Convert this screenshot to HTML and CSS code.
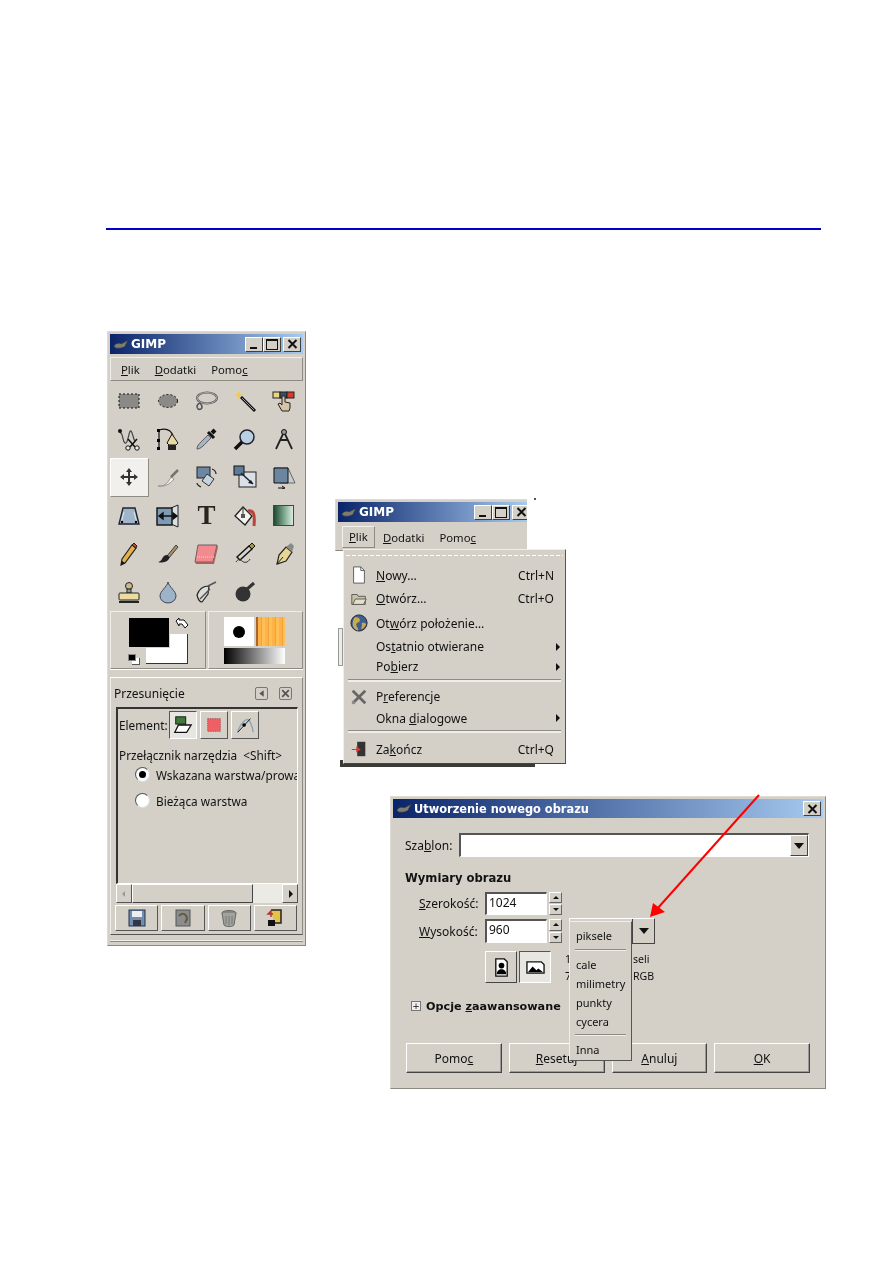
FILE: index.html
```html
<!DOCTYPE html>
<html lang="pl">
<head>
    <meta charset="UTF-8">
    <meta name="viewport" content="width=device-width, initial-scale=1.0">
    <title>GIMP - nowy obraz</title>
    <link rel="stylesheet" href="styles.css">
</head>
<body>
<div class="page">
    <div class="rule"></div>

    <!-- toolbox -->
    <div class="win toolbox">
        <div class="titlebar">
            <svg class="wilber" viewBox="0 0 20 12"><path d="M1 8 C3 4 7 4 10 5 L18 1 L15 6 C15 10 7 11 3 10Z" fill="#7d7c70" stroke="#35352f" stroke-width=".7"/></svg>
            <span class="title">GIMP</span>
            <div class="winbtns">
                <span class="winbtn"><i class="min"></i></span><span class="winbtn"><i class="max"></i></span><span class="winbtn gap"><svg class="cross" viewBox="0 0 10 10"><path d="M1 1l8 8M9 1l-8 8" stroke="#111" stroke-width="2"/></svg></span>
            </div>
        </div>
        <div class="menubar">
            <span class="menuitem"><u>P</u>lik</span>
            <span class="menuitem"><u>D</u>odatki</span>
            <span class="menuitem">Pomo<u>c</u></span>
        </div>
        <div class="tools">
            <div class="tool"><svg viewBox="0 0 24 24"><rect x="2" y="5" width="20" height="14" fill="#8b8a86" stroke="#111" stroke-dasharray="2 2"/></svg></div>
            <div class="tool"><svg viewBox="0 0 24 24"><ellipse cx="12" cy="12" rx="9.5" ry="6.5" fill="#8b8a86" stroke="#111" stroke-dasharray="2 2"/></svg></div>
            <div class="tool"><svg viewBox="0 0 24 24"><ellipse cx="13" cy="9" rx="10" ry="5.5" fill="none" stroke="#555" stroke-width="2"/><ellipse cx="13" cy="9" rx="10" ry="5.5" fill="none" stroke="#ddd" stroke-width=".6"/><path d="M6 14c-3 1-4 4-2 6 2 1 4 0 4-2s-1-3-2-4" fill="none" stroke="#555" stroke-width="1.6"/></svg></div>
            <div class="tool"><svg viewBox="0 0 24 24"><path d="M8 8l14 14" stroke="#111" stroke-width="3"/><path d="M9 9l12 12" stroke="#999"/><path d="M6 1l1 4 4 1-4 1-1 4-1-4-4-1 4-1z" fill="#f4c93c"/></svg></div>
            <div class="tool"><svg viewBox="0 0 24 24"><rect x="1" y="3" width="7" height="6" fill="#ecd67c" stroke="#222"/><rect x="8" y="3" width="7" height="6" fill="#36506f" stroke="#222"/><rect x="15" y="3" width="7" height="6" fill="#d93a2c" stroke="#222"/><path d="M10 7h3v6l5 1v5l-1 3H10L6 15l2-1 2 2z" fill="#d6c3a8" stroke="#222"/></svg></div>

            <div class="tool"><svg viewBox="0 0 24 24"><path d="M3 5c4 3 2 9 5 11S12 2 14 4s2 8 4 10" fill="none" stroke="#444" stroke-width="1.2"/><circle cx="3" cy="4" r="2" fill="#111"/><path d="M11 12l7 8M20 12l-7 8" stroke="#111" stroke-width="1.5"/><circle cx="11" cy="21" r="2.2" fill="#eee" stroke="#111"/><circle cx="20" cy="21" r="2.2" fill="#eee" stroke="#111"/></svg></div>
            <div class="tool"><svg viewBox="0 0 24 24"><path d="M3 3v20M3 3c7-2 12 0 14 6" fill="none" stroke="#111" stroke-width="1.2"/><rect x="1" y="2" width="3" height="3"/><rect x="1" y="12" width="3" height="3"/><rect x="1" y="20" width="3" height="3"/><path d="M16 7l-5 9 2 2h7l2-2z" fill="#e7d9a0" stroke="#111"/><rect x="12" y="18" width="8" height="5" fill="#222"/></svg></div>
            <div class="tool"><svg viewBox="0 0 24 24"><path d="M3 22c0-4 3-6 11-14l3 3C10 18 7 22 3 22z" fill="#a9b4bd" stroke="#556"/><path d="M14 5l6 6" stroke="#111" stroke-width="3"/><path d="M18 6l3-3" stroke="#111" stroke-width="4"/></svg></div>
            <div class="tool"><svg viewBox="0 0 24 24"><circle cx="14" cy="10" r="7" fill="#b9cfe2" stroke="#223" stroke-width="1.5"/><path d="M9 15l-7 7" stroke="#111" stroke-width="3.5"/></svg></div>
            <div class="tool"><svg viewBox="0 0 24 24"><circle cx="12" cy="5" r="2.5" fill="#999" stroke="#111"/><path d="M11 7L4 22M13 7l7 15M8 13h8" fill="none" stroke="#222" stroke-width="1.8"/></svg></div>

            <div class="tool active"><svg viewBox="0 0 24 24"><path d="M12 3l3 4h-2v4h4V9l4 3-4 3v-2h-4v4h2l-3 4-3-4h2v-4H7v2l-4-3 4-3v2h4V7H9z" fill="#333"/></svg></div>
            <div class="tool"><svg viewBox="0 0 24 24"><path d="M2 21c6 1 10-3 13-9l3 2c-3 4-8 8-16 7z" fill="#f1f1ee" stroke="#99958c"/><path d="M15 12l7-7" stroke="#77736c" stroke-width="2.5"/></svg></div>
            <div class="tool"><svg viewBox="0 0 24 24"><rect x="3" y="2" width="13" height="11" fill="#6d86a3" stroke="#222"/><path d="M13 9l7 5-5 7-7-5z" fill="#c6d2de" stroke="#333"/><path d="M18 4c3 1 4 3 4 5M3 18c0 2 2 3 4 4" fill="none" stroke="#222" stroke-width="1.2"/></svg></div>
            <div class="tool"><svg viewBox="0 0 24 24"><rect x="6" y="7" width="17" height="15" fill="#d9e0e6" stroke="#222"/><rect x="1" y="1" width="10" height="9" fill="#5e7a99" stroke="#111"/><path d="M8 8l12 11" stroke="#223" stroke-width="1.5"/><path d="M20 19l-5-1 3-3z" fill="#111"/></svg></div>
            <div class="tool"><svg viewBox="0 0 24 24"><path d="M2 3h14l7 15H8z" fill="#c9cdd0" stroke="#666"/><path d="M2 3h14v15H2z" fill="#6c86a0" stroke="#111"/><path d="M6 23h6m-2-2l3 2-3 1" stroke="#111" fill="none"/></svg></div>

            <div class="tool"><svg viewBox="0 0 24 24"><path d="M6 4h12l4 16H2z" fill="#9fb5c9" stroke="#223" stroke-width="1.4"/><path d="M7 8L4 19M17 8l3 11" stroke="#dfe8ef"/><circle cx="5" cy="18" r="1.2"/><circle cx="19" cy="18" r="1.2"/></svg></div>
            <div class="tool"><svg viewBox="0 0 24 24"><path d="M15 4l7-3v22l-7-3z" fill="#d9dee3" stroke="#222"/><rect x="1" y="4" width="15" height="17" fill="#7f9ab5" stroke="#111" stroke-width="1.4"/><path d="M3 12h18M3 12l4-3v6zM21 12l-4-3v6z" fill="#111" stroke="#111" stroke-width="1.4"/></svg></div>
            <div class="tool"><span class="glyph-t">T</span></div>
            <div class="tool"><svg viewBox="0 0 24 24"><path d="M10 3l9 9-7 9-10-9z" fill="#f2f2ee" stroke="#222" stroke-width="1.3"/><path d="M10 3v9" stroke="#333"/><rect x="8" y="10" width="4" height="4" fill="#555"/><path d="M15 7c6-1 7 4 6 15" fill="none" stroke="#b8443a" stroke-width="3"/></svg></div>
            <div class="tool"><div class="blend"></div></div>

            <div class="tool"><svg viewBox="0 0 24 24"><path d="M5 17L15 3l4 3L8 21l-4 2z" fill="#e3b24c" stroke="#222" stroke-width="1.2"/><path d="M15 3l4 3 1-2-3-3z" fill="#c8443c" stroke="#222"/><path d="M4 23l1-4 3 2z" fill="#111"/></svg></div>
            <div class="tool"><svg viewBox="0 0 24 24"><path d="M11 14L20 3l2 2-9 11z" fill="#a88c6e" stroke="#443"/><path d="M11 13c-3 0-4 2-5 4-1 2-3 3-4 3 3 1 8 1 11-3 1-2 0-3-2-4z" fill="#222"/></svg></div>
            <div class="tool"><svg viewBox="0 0 24 24"><path d="M4 3h19l-4 17H1z" fill="#f28b8f" stroke="#6e5f5c"/><path d="M1 20h18l4-17 1 2-4 17H2z" fill="#a6625f"/><path d="M3 15h17" stroke="#fcd" stroke-dasharray="1 1"/></svg></div>
            <div class="tool"><svg viewBox="0 0 24 24"><path d="M4 15L16 4l3 3L7 18z" fill="#d8d6cc" stroke="#111" stroke-width="1.4"/><path d="M16 4l3-3 3 3-3 3z" fill="#a8963f" stroke="#111"/><path d="M3 20c2-3 4-3 6-1s6 2 8-2" fill="none" stroke="#333"/></svg></div>
            <div class="tool"><svg viewBox="0 0 24 24"><path d="M14 5l6 5-6 9-9 3 2-9z" fill="#e7d695" stroke="#222" stroke-width="1.2"/><path d="M5 22l6-7" stroke="#222"/><path d="M14 5l5-4 3 3-2 6z" fill="#8a8a86"/></svg></div>

            <div class="tool"><svg viewBox="0 0 24 24"><circle cx="12" cy="6" r="3.5" fill="#cbb98a" stroke="#222"/><path d="M10 9h4v4h-4z" fill="#999" stroke="#222"/><rect x="2" y="13" width="20" height="7" rx="1" fill="#ecdca0" stroke="#222"/><path d="M2 22h20" stroke="#222" stroke-width="2"/></svg></div>
            <div class="tool"><svg viewBox="0 0 24 24"><path d="M12 2c1 5 8 9 8 14a8 7 0 01-16 0C4 11 11 7 12 2z" fill="#9db4c8" stroke="#445"/></svg></div>
            <div class="tool"><svg viewBox="0 0 24 24"><path d="M3 15c2-6 7-9 12-9l-1 8-6 8c-2 0-4-3-5-7z" fill="#dcdcd8" stroke="#222" stroke-width="1.2"/><path d="M6 19l10-10M14 6l8-4" stroke="#555" stroke-width="1.5"/></svg></div>
            <div class="tool"><svg viewBox="0 0 24 24"><circle cx="10" cy="14" r="7.5" fill="#333"/><path d="M13 10l8-7" stroke="#333" stroke-width="3"/></svg></div>
            <div class="tool"></div>
        </div>
        <div class="colors">
            <div class="colorcell">
                <span class="bg-swatch"></span>
                <span class="fg-swatch"></span>
                <svg class="swap" viewBox="0 0 14 14"><path d="M1 4l3-3v2h5l4 5-3 3-3-4H4v2z" fill="#fff" stroke="#111"/></svg>
                <span class="def-bg"></span>
                <span class="def-fg"></span>
            </div>
            <div class="colorcell">
                <span class="brush"><i></i></span>
                <span class="pattern"></span>
                <span class="gradient"></span>
            </div>
        </div>
        <div class="dock">
            <div class="dockhead">
                <span>Przesunięcie</span>
                <span class="dockbtn"><svg viewBox="0 0 10 10"><path d="M7 2v6L3 5z" fill="#555"/></svg></span>
                <span class="dockbtn"><svg viewBox="0 0 10 10"><path d="M2 2l6 6M8 2l-6 6" stroke="#555" stroke-width="1.6"/></svg></span>
            </div>
            <div class="options">
                <div class="optrow">
                    <span class="optlabel">Element:</span>
                    <span class="toggle on"><svg viewBox="0 0 22 22"><rect x="3" y="2" width="11" height="8" fill="#3f7a3a" stroke="#111"/><path d="M6 11h14l-5 8H2z" fill="#fff" stroke="#111" stroke-width="1.4"/></svg></span>
                    <span class="toggle"><svg viewBox="0 0 22 22"><rect x="4" y="4" width="14" height="14" fill="#ef5f63" stroke="#a55" stroke-dasharray="1.5 1"/></svg></span>
                    <span class="toggle"><svg viewBox="0 0 22 22"><path d="M3 19C6 8 12 5 14 5s5 7 6 14" fill="none" stroke="#8aa3bb" stroke-width="1.5"/><path d="M3 19L17 4" stroke="#111"/><circle cx="10" cy="11" r="2"/></svg></span>
                </div>
                <div class="switchrow">Przełącznik narzędzia &nbsp;&lt;Shift&gt;</div>
                <div class="radio"><span class="dot checked"></span><span class="radiotext">Wskazana warstwa/prowadnica</span></div>
                <div class="radio second"><span class="dot"></span><span class="radiotext">Bieżąca warstwa</span></div>
            </div>
            <div class="scrollbar">
                <span class="sbtn"><svg viewBox="0 0 10 10"><path d="M6 2v6L3 5z" fill="#999"/></svg></span>
                <span class="thumb"></span>
                <span class="trough"></span>
                <span class="sbtn"><svg viewBox="0 0 10 10"><path d="M4 1v8l4-4z" fill="#111"/></svg></span>
            </div>
            <div class="dockbtns">
                <span class="bigbtn"><svg viewBox="0 0 20 20"><rect x="2" y="2" width="16" height="16" fill="#6f8eb2" stroke="#234"/><rect x="5" y="3" width="10" height="6" fill="#eee"/><rect x="6" y="12" width="8" height="6" fill="#334"/></svg></span>
                <span class="bigbtn"><svg viewBox="0 0 20 20"><rect x="3" y="2" width="14" height="16" fill="#8b8d8c" stroke="#555"/><path d="M6 8c3-4 8-2 8 3l-2 4" fill="none" stroke="#665a3c" stroke-width="2"/></svg></span>
                <span class="bigbtn"><svg viewBox="0 0 20 20"><ellipse cx="10" cy="5" rx="7" ry="2.5" fill="#888" stroke="#666"/><path d="M3 5l2 12c2 2 8 2 10 0l2-12" fill="#a3a39e" stroke="#666"/><path d="M7 8v8M10 8v9M13 8v8" stroke="#777"/></svg></span>
                <span class="bigbtn"><svg viewBox="0 0 20 20"><path d="M6 2h10v13H9" fill="#e4c24a" stroke="#222" stroke-width="1.5"/><path d="M8 6H3l3-3v6" fill="none" stroke="#a33" stroke-width="1.4"/><rect x="3" y="12" width="7" height="6" fill="#111"/></svg></span>
            </div>
        </div>
        <div class="footline"></div>
    </div>

    <!-- same toolbox, cut off, with open Plik menu -->
    <div class="shadowstrip"></div>
    <div class="sliver"></div>
    <div class="speck"></div>
    <div class="win clipped">
        <div class="titlebar">
            <svg class="wilber" viewBox="0 0 20 12"><path d="M1 8 C3 4 7 4 10 5 L18 1 L15 6 C15 10 7 11 3 10Z" fill="#7d7c70" stroke="#35352f" stroke-width=".7"/></svg>
            <span class="title">GIMP</span>
            <div class="winbtns">
                <span class="winbtn"><i class="min"></i></span><span class="winbtn"><i class="max"></i></span><span class="winbtn gap"><svg class="cross" viewBox="0 0 10 10"><path d="M1 1l8 8M9 1l-8 8" stroke="#111" stroke-width="2"/></svg></span>
            </div>
        </div>
        <div class="menubar flat">
            <span class="menuitem open"><u>P</u>lik</span>
            <span class="menuitem"><u>D</u>odatki</span>
            <span class="menuitem">Pomo<u>c</u></span>
        </div>
    </div>
    <div class="filemenu">
        <div class="tearoff"></div>
        <div class="mrow r24"><span class="micon"><svg viewBox="0 0 20 20"><path d="M4 1h8l4 4v14H4z" fill="#fff" stroke="#555"/><path d="M12 1v4h4" fill="none" stroke="#555"/></svg></span><span><u>N</u>owy…</span><span class="key">Ctrl+N</span></div>
        <div class="mrow r23"><span class="micon"><svg viewBox="0 0 20 20"><path d="M2 5h6l1 2h8v9H2z" fill="#c8c3a8" stroke="#555"/><path d="M3 16l3-6h12l-3 6z" fill="#e4dfc6" stroke="#555"/></svg></span><span><u>O</u>twórz…</span><span class="key">Ctrl+O</span></div>
        <div class="mrow r26"><span class="micon"><svg viewBox="0 0 20 20"><circle cx="10" cy="10" r="9" fill="#3c5f8d" stroke="#223"/><path d="M5 4c3-1 6 0 6 3s-4 2-4 5 3 4 2 6c-3 0-6-3-6-7 0-3 1-5 2-7zM13 10c2-1 4 0 5 1-1 3-3 5-5 6-1-2 1-3 0-7z" fill="#c9a951"/></svg></span><span>Ot<u>w</u>órz położenie…</span></div>
        <div class="mrow r21"><span class="micon"></span><span>Os<u>t</u>atnio otwierane</span><span class="subarrow"></span></div>
        <div class="mrow r19"><span class="micon"></span><span>Po<u>b</u>ierz</span><span class="subarrow"></span></div>
        <div class="msep s9"></div>
        <div class="mrow r23"><span class="micon"><svg viewBox="0 0 20 20"><path d="M3 3l14 14M17 3L3 17" stroke="#666" stroke-width="3"/><circle cx="4" cy="16" r="2" fill="#888"/></svg></span><span>P<u>r</u>eferencje</span></div>
        <div class="mrow r20"><span class="micon"></span><span>Okna <u>d</u>ialogowe</span><span class="subarrow"></span></div>
        <div class="msep s7"></div>
        <div class="mrow r28"><span class="micon"><svg viewBox="0 0 20 20"><rect x="8" y="2" width="9" height="16" fill="#333"/><path d="M2 10h5V7l5 3.5L7 14v-3H2z" fill="#d33"/></svg></span><span>Za<u>k</u>ończ</span><span class="key">Ctrl+Q</span></div>
    </div>

    <!-- new image dialog -->
    <div class="win dialog">
        <div class="titlebar fade">
            <svg class="wilber" viewBox="0 0 20 12"><path d="M1 8 C3 4 7 4 10 5 L18 1 L15 6 C15 10 7 11 3 10Z" fill="#7d7c70" stroke="#35352f" stroke-width=".7"/></svg>
            <span class="title small">Utworzenie nowego obrazu</span>
            <div class="winbtns">
                <span class="winbtn"><svg class="cross" viewBox="0 0 10 10"><path d="M1 1l8 8M9 1l-8 8" stroke="#111" stroke-width="2"/></svg></span>
            </div>
        </div>
        <div class="dlgbody">
            <div class="tplrow">
                <span class="lbl">Sza<u>b</u>lon:</span>
                <div class="combo"><span class="comboarrow"></span></div>
            </div>
            <div class="heading">Wymiary obrazu</div>
            <div class="sizerow">
                <span class="sizelbl"><u>S</u>zerokość:</span>
                <span class="entry">1024</span>
                <span class="spin"><i class="up"></i><i class="down"></i></span>
            </div>
            <div class="sizerow second">
                <span class="sizelbl"><u>W</u>ysokość:</span>
                <span class="entry">960</span>
                <span class="spin"><i class="up"></i><i class="down"></i></span>
                <span class="unitcombo"><span class="unitval"></span><span class="unitarrow"></span></span>
            </div>
            <div class="orientrow">
                <span class="orient"><svg viewBox="0 0 20 20"><path d="M4 1h9l3 3v15H4z" fill="#fff" stroke="#111" stroke-width="1.4"/><circle cx="10" cy="8" r="3"/><path d="M5 17c0-7 10-7 10 0z"/></svg></span>
                <span class="orient on"><svg viewBox="0 0 20 20"><path d="M1 4h15l3 3v9H1z" fill="#fff" stroke="#111" stroke-width="1.4"/><path d="M2 15l5-6 4 4 2-2 5 4z"/></svg></span>
                <div class="imginfo"><span>1</span><span>seli</span><span>7</span><span>RGB</span></div>
            </div>
            <div class="advanced">
                <span class="expander">+</span>
                <span>Opcje <u>z</u>aawansowane</span>
            </div>
            <div class="dlgbtns">
                <span class="dlgbtn">Pomo<u>c</u></span>
                <span class="dlgbtn"><u>R</u>esetuj</span>
                <span class="dlgbtn"><u>A</u>nuluj</span>
                <span class="dlgbtn"><u>O</u>K</span>
            </div>
        </div>
        <div class="unitpopup">
            <div class="uitem">piksele</div>
            <div class="usep"></div>
            <div class="uitem">cale</div>
            <div class="uitem">milimetry</div>
            <div class="uitem">punkty</div>
            <div class="uitem">cycera</div>
            <div class="usep last"></div>
            <div class="uitem">Inna</div>
        </div>
    </div>

    <svg class="redarrow" viewBox="0 0 893 1263"><path d="M759 795L657 909" stroke="#f00" stroke-width="2" fill="none"/><path d="M650 917l3-14 12 9z" fill="#f00"/></svg>
</div>
</body>
</html>
```

FILE: styles.css
```css
* { box-sizing: border-box; }
body { margin: 0; background: #fff; font-family: "Noto Sans", sans-serif; font-size: 12px; color: #111; }
.page { position: relative; width: 893px; height: 1263px; overflow: hidden; background: #fff; }
.rule { position: absolute; left: 106px; top: 228px; width: 715px; height: 2px; background: #0000c8; }
.redarrow { position: absolute; left: 0; top: 0; width: 893px; height: 1263px; pointer-events: none; }

/* windows */
.win { position: absolute; background: #d4d0c8; border: 1px solid; border-color: #dedbd4 #8a8880 #8a8880 #dedbd4; padding: 2px; filter: blur(.4px); }
.titlebar { display: flex; align-items: center; height: 20px; padding: 0 2px 0 3px; background: linear-gradient(90deg, #0a246a, #a6caf0); color: #fff; }
.titlebar.fade { height: 19px; }
.wilber { width: 17px; height: 11px; margin-right: 1px; flex: none; }
.title { font-family: "DejaVu Sans", sans-serif; font-weight: bold; font-size: 12px; }
.title.small { font-size: 11.4px; }
.winbtns { margin-left: auto; display: flex; }
.winbtn { display: flex; align-items: center; justify-content: center; width: 18px; height: 15px; background: #d4d0c8; border: 1px solid; border-color: #fff #404040 #404040 #fff; color: #111; overflow: hidden; }
.winbtn.gap { margin-left: 2px; }
.winbtn i { font-style: normal; display: block; }
.min { width: 7px; height: 2px; background: #111; margin-top: 7px; margin-right: 2px; }
.max { width: 12px; height: 11px; border: 1px solid #111; border-top-width: 2px; }
.cross { width: 11px; height: 10px; }

.menubar { display: flex; align-items: center; height: 24px; margin-top: 3px; padding-left: 10px; gap: 15px; font-size: 11.3px; border: 1px solid; border-color: #f0eee9 #8d8b84 #8d8b84 #f0eee9; }
.menubar.flat { margin-top: 4px; border: 0; padding-left: 4px; height: 22px; }
.menuitem.open { height: 22px; line-height: 20px; padding: 0 6px; margin-right: -7px; width: 33px; border: 1px solid; border-color: #f4f2ee #8d8b84 #8d8b84 #f4f2ee; }

/* toolbox */
.toolbox { left: 107px; top: 331px; width: 199px; height: 615px; }
.tools { display: grid; grid-template-columns: repeat(5, 1fr); grid-auto-rows: 38.2px; margin-top: 1px; }
.tool { display: flex; align-items: center; justify-content: center; }
.tool svg { width: 24px; height: 24px; }
.tool.active { background: #f1f0ec; background-image: radial-gradient(#cfccc5 .6px, transparent .7px); background-size: 2px 2px; border: 1px solid; border-color: #fff #8d8b84 #8d8b84 #fff; }
.glyph-t { font-family: "Liberation Serif", serif; font-weight: bold; font-size: 27px; line-height: 1; color: #2a241e; }
.blend { width: 21px; height: 21px; background: linear-gradient(90deg, #1f4a33, #9cc3aa 70%, #dfe9e0); border: 1px solid #444; }

.colors { display: grid; grid-template-columns: 96px 95px; gap: 2px; height: 59px; border-bottom: 1px solid #fff; }
.colorcell { position: relative; border: 1px solid; border-color: #f0eee9 #8d8b84 #8d8b84 #f0eee9; }
.fg-swatch { position: absolute; left: 17px; top: 5px; width: 42px; height: 31px; background: #000; border: 1px solid #d4d0c8; }
.bg-swatch { position: absolute; left: 35px; top: 22px; width: 42px; height: 30px; background: #fff; border-right: 1px solid #333; border-bottom: 1px solid #333; }
.swap { position: absolute; left: 64px; top: 5px; width: 14px; height: 14px; }
.def-fg { position: absolute; left: 17px; top: 42px; width: 8px; height: 7px; background: #000; border: 1px solid #888; }
.def-bg { position: absolute; left: 21px; top: 46px; width: 8px; height: 7px; background: #fff; border-right: 1px solid #555; border-bottom: 1px solid #555; }
.brush { position: absolute; left: 15px; top: 5px; width: 30px; height: 29px; background: #fff; display: flex; align-items: center; justify-content: center; }
.brush i { width: 12px; height: 12px; border-radius: 50%; background: #000; }
.pattern { position: absolute; left: 47px; top: 5px; width: 29px; height: 29px; background: repeating-linear-gradient(90deg, #ffb347 0 3px, #f0a33a 3px 4px, #ffbf55 4px 7px); border-left: 2px solid #a8662a; }
.gradient { position: absolute; left: 15px; top: 36px; width: 61px; height: 16px; background: linear-gradient(90deg, #000, #fff); }

.dock { height: 258px; margin-top: 7px; border: 1px solid; border-color: #8d8b84 #8d8b84 #555 #f0eee9; border-top: 1px solid #fff; }
.dockhead { display: flex; align-items: center; gap: 11px; height: 29px; padding: 2px 10px 0 3px; }
.dockhead span:first-child { margin-right: auto; }
.dockbtn { width: 13px; height: 13px; border: 1px solid #777; border-radius: 2px; }
.dockbtn svg { display: block; width: 11px; height: 11px; }
.options { height: 177px; margin: 0 4px 0 5px; border: 1px solid; border-color: #333 #fff #fff #333; border-width: 2px 1px 1px 2px; padding: 2px 0 0 1px; overflow: hidden; font-size: 11.8px; }
.optrow { display: flex; align-items: center; gap: 3px; height: 28px; }
.optlabel { width: 47px; }
.toggle { width: 28px; height: 28px; display: flex; align-items: center; justify-content: center; border: 1px solid; border-color: #fff #555 #555 #fff; }
.toggle.on { background: #e8e6e0; border-color: #555 #fff #fff #555; }
.toggle svg { width: 20px; height: 20px; }
.switchrow { margin-top: 8px; white-space: nowrap; }
.radio { display: flex; align-items: center; gap: 6px; margin: 3px 0 0 16px; height: 17px; white-space: nowrap; }
.radio.second { margin-top: 9px; }
.radiotext { overflow: hidden; }
.dot { flex: none; width: 15px; height: 15px; border-radius: 50%; background: #fff; border: 1px solid; border-color: #555 #ddd #ddd #555; display: flex; align-items: center; justify-content: center; }
.dot.checked::after { content: ""; width: 7px; height: 7px; border-radius: 50%; background: #000; }
.scrollbar { display: flex; height: 19px; margin: 0 4px 0 5px; }
.sbtn { width: 16px; display: flex; align-items: center; justify-content: center; border: 1px solid; border-color: #fff #555 #555 #fff; }
.sbtn svg { width: 10px; height: 10px; }
.thumb { width: 121px; border: 1px solid; border-color: #fff #444 #444 #fff; }
.trough { flex: 1; background: #eceae5; }
.dockbtns { display: flex; gap: 3px; margin: 2px 5px 0 4px; }
.bigbtn { flex: 1; height: 26px; display: flex; align-items: center; justify-content: center; border: 1px solid; border-color: #fff #555 #555 #fff; }
.bigbtn svg { width: 20px; height: 20px; }
.footline { height: 2px; margin-top: 5px; background: #f0eee9; border-bottom: 1px solid #8d8b84; }

/* cut off copy with the file menu */
.clipped { left: 335px; top: 499px; width: 192px; height: 52px; border-right: 0; padding-right: 0; padding-bottom: 0; overflow: hidden; }
.clipped .winbtns { margin-right: -3px; }
.clipped .titlebar { padding-right: 0; }
.shadowstrip { position: absolute; left: 340px; top: 760px; width: 195px; height: 7px; background: #3a3a36; }
.sliver { position: absolute; left: 338px; top: 628px; width: 5px; height: 38px; background: #ececE8; border: 1px solid #999; }
.speck { position: absolute; left: 534px; top: 498px; width: 2px; height: 2px; background: #555; }
.filemenu { position: absolute; left: 343px; top: 549px; width: 223px; height: 215px; background: #d4d0c8; border: 1px solid; border-color: #f0eee9 #555 #444 #f0eee9; padding: 0 2px; filter: blur(.4px); }
.tearoff { height: 1px; margin: 5px 0 7px; background: repeating-linear-gradient(90deg, #fff 0 4px, transparent 4px 6px); }
.mrow { display: flex; align-items: center; padding: 0 3px 0 4px; white-space: nowrap; }
.r19 { height: 19px; }
.r20 { height: 20px; }
.r21 { height: 21px; }
.r23 { height: 23px; }
.r24 { height: 24px; }
.r26 { height: 26px; }
.r28 { height: 28px; }
.micon { flex: none; width: 26px; display: flex; }
.micon svg { width: 18px; height: 18px; }
.key { margin-left: auto; padding-right: 6px; }
.subarrow { margin-left: auto; width: 0; height: 0; border-left: 4px solid #111; border-top: 4px solid transparent; border-bottom: 4px solid transparent; }
.msep { margin: 0 2px; position: relative; }
.msep::after { content: ""; display: block; height: 2px; background: #f0eee9; border-top: 1px solid #8d8b84; }
.s9 { height: 9px; padding-top: 3px; }
.s7 { height: 7px; padding-top: 2px; }

/* dialog */
.dialog { left: 390px; top: 796px; width: 436px; height: 293px; }
.dlgbody { padding: 15px 13px 0 12px; }
.tplrow { display: flex; align-items: center; gap: 8px; height: 24px; }
.lbl { width: 46px; }
.combo { flex: 1; height: 24px; margin-right: 1px; background: #fff; border: 1px solid; border-width: 2px 1px 1px 2px; border-color: #555 #fff #fff #555; display: flex; justify-content: flex-end; }
.comboarrow { width: 18px; background: #d4d0c8; border: 1px solid; border-color: #fff #444 #444 #fff; display: flex; align-items: center; justify-content: center; }
.comboarrow::after, .unitarrow::after { content: ""; border-top: 6px solid #111; border-left: 5px solid transparent; border-right: 5px solid transparent; }
.heading { margin-top: 14px; font-family: "DejaVu Sans", sans-serif; font-size: 11.6px; font-weight: bold; height: 14px; line-height: 14px; }
.sizerow { display: flex; align-items: center; margin-top: 7px; height: 23px; padding-left: 14px; }
.sizerow.second { margin-top: 4px; height: 24px; }
.sizelbl { width: 66px; }
.entry { width: 62px; height: 100%; background: #fff; border: 1px solid; border-width: 2px 1px 1px 2px; border-color: #555 #fff #fff #555; padding-left: 2px; line-height: 18px; }
.spin { display: flex; flex-direction: column; gap: 1px; margin-left: 2px; height: 100%; width: 13px; }
.spin i { flex: 1; display: flex; align-items: center; justify-content: center; border: 1px solid; border-color: #fff #666 #666 #fff; }
.up::after { content: ""; border-bottom: 3px solid #111; border-left: 3px solid transparent; border-right: 3px solid transparent; }
.down::after { content: ""; border-top: 3px solid #111; border-left: 3px solid transparent; border-right: 3px solid transparent; }
.unitcombo { display: flex; width: 86px; height: 26px; margin-left: 7px; border: 1px solid; border-color: #fff #444 #444 #fff; }
.unitval { flex: 1; }
.unitarrow { width: 22px; display: flex; align-items: center; justify-content: center; border-left: 1px solid #444; }
.orientrow { display: flex; align-items: flex-start; gap: 2px; margin-top: 8px; padding-left: 80px; height: 32px; }
.orient { width: 32px; height: 32px; display: flex; align-items: center; justify-content: center; border: 1px solid; border-color: #fff #444 #444 #fff; }
.orient.on { background: #e8e6e0; border-color: #555 #fff #fff #555; }
.orient svg { width: 19px; height: 19px; }
.imginfo { display: grid; grid-template-columns: 68px auto; margin-left: 12px; font-size: 10.6px; line-height: 17px; }
.advanced { display: flex; align-items: center; gap: 5px; margin-top: 15px; padding-left: 6px; font-family: "DejaVu Sans", sans-serif; font-size: 11.2px; font-weight: bold; height: 16px; }
.expander { display: flex; align-items: center; justify-content: center; width: 10px; height: 10px; border: 1px solid #777; background: #eee; font-weight: normal; font-size: 9px; line-height: 1; }
.dlgbtns { display: flex; gap: 7px; margin: 29px 0 0 1px; }
.dlgbtn { flex: 1; height: 30px; display: flex; align-items: center; justify-content: center; border: 1px solid; border-color: #fff #444 #444 #fff; box-shadow: inset -1px -1px 0 #999; }
.unitpopup { position: absolute; left: 178px; top: 124px; width: 63px; height: 140px; background: #d4d0c8; border: 1px solid; border-color: #f0eee9 #555 #555 #f0eee9; padding: 4px 0 0 6px; font-size: 11px; line-height: 19.1px; }
.usep { height: 2px; margin: 4px 5px 4px -1px; background: #f0eee9; border-top: 1px solid #8d8b84; }
.usep.last { margin: 3px 5px 4px -1px; }
```
